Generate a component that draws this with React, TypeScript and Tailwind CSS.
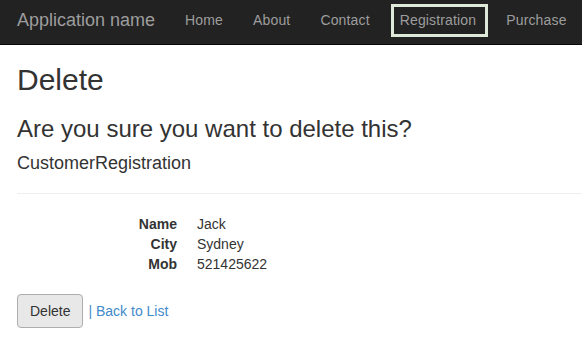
import React from "react";

const navLinks = ["Home", "About", "Contact", "Registration", "Purchase"];

const details: [string, string][] = [
  ["Name", "Jack"],
  ["City", "Sydney"],
  ["Mob", "521425622"],
];

export default function App() {
  return (
    <div className="min-h-screen bg-white text-[#333] text-[14px] leading-[20px] font-['Liberation_Sans',Arial,sans-serif]">
      {/* Navbar */}
      <div className="h-[45px] bg-[#222] border-b border-[#080808] flex items-stretch">
        <div className="pl-[17px] pr-[15px] flex items-center text-[18px] text-[#9d9d9d] pb-[5px]">
          Application name
        </div>
        <div className="flex">
          {navLinks.map((link) => (
            <div
              key={link}
              className="relative px-[15px] flex items-center text-[#9d9d9d] pb-[5px] tracking-[0.15px]"
            >
              {link === "Registration" && (
                <span className="absolute left-[6px] right-[3px] top-[4px] h-[33px] border-[3px] border-[#dfe9da]" />
              )}
              <span className="relative">{link}</span>
            </div>
          ))}
        </div>
      </div>

      <div className="pl-[17px]">
        <h2 className="mt-[18px] mb-[10px] text-[30px] leading-[33px]">Delete</h2>
        <h3 className="mt-[20px] mb-[10px] text-[24px] leading-[26px]">
          Are you sure you want to delete this?
        </h3>
        <div>
          <h4 className="mt-[11px] mb-[10px] text-[18px] leading-[20px]">CustomerRegistration</h4>
          <hr className="mt-[20px] mb-[20px] border-t border-[#eee]" />
          <div className="grid grid-cols-[160px_1fr] gap-x-[20px]">
            {details.map(([k, v]) => (
              <React.Fragment key={k}>
                <div className="text-right font-bold">{k}</div>
                <div>{v}</div>
              </React.Fragment>
            ))}
          </div>

          <div className="mt-[20px] flex items-center">
            <button className="h-[34px] px-[12px] border border-[#adadad] rounded-[4px] bg-[#e8e8e8] text-[#333]">
              Delete
            </button>
            <span className="ml-[5px]">
              <span className="text-[#428bca]">|</span>{" "}
              <a className="text-[#428bca]">Back to List</a>
            </span>
          </div>
        </div>
      </div>
    </div>
  );
}
